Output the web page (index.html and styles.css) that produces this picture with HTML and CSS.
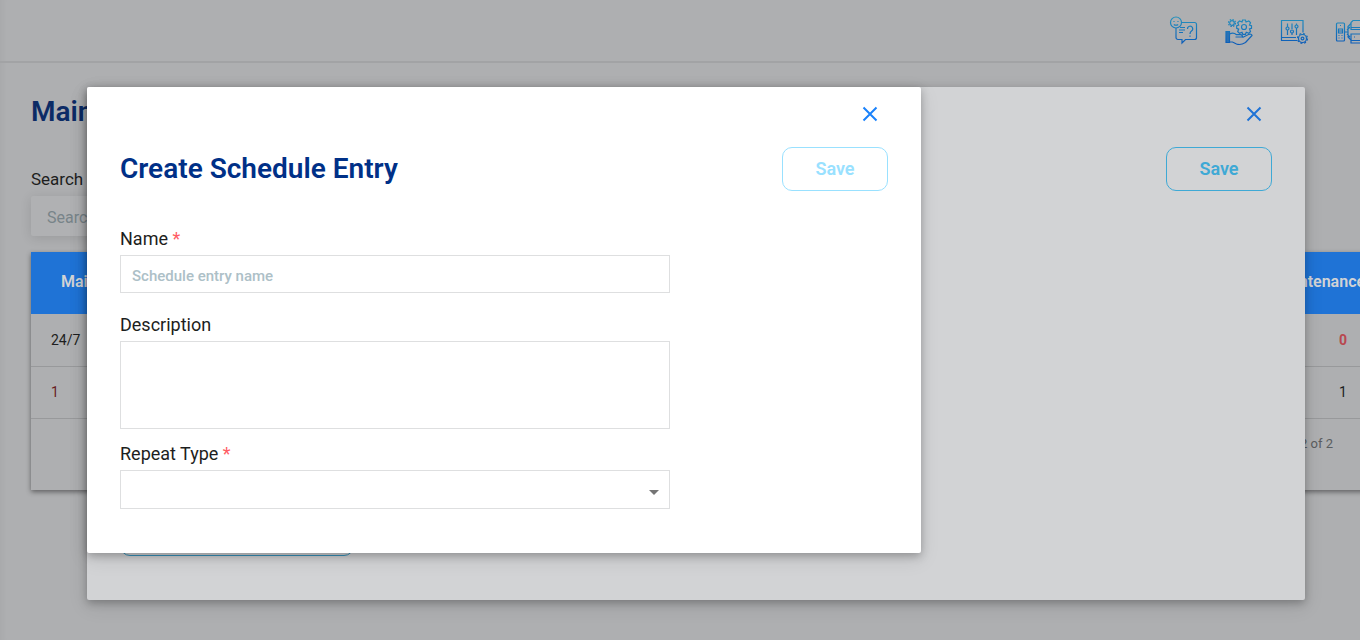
FILE: index.html
```html
<!DOCTYPE html>
<html lang="en">
<head>
<meta charset="utf-8">
<title>Create Schedule Entry</title>
<link rel="stylesheet" href="styles.css">
</head>
<body>
<svg class="defs" width="0" height="0" aria-hidden="true">
  <defs>
    <linearGradient id="ink" gradientUnits="userSpaceOnUse" x1="0" y1="0" x2="0" y2="30">
      <stop offset="0" stop-color="#2593bd"/>
      <stop offset="1" stop-color="#0a57b8"/>
    </linearGradient>
  </defs>
</svg>
<div class="page">
  <header class="topbar">
    <nav class="tools" aria-label="Tools">
      <a href="#help" aria-label="Help"><svg class="tool-icon" viewBox="0 0 30 30">
        <circle cx="7" cy="6.500" r="5.500"/>
        <path d="M5 5v1M9 5v1M4.800 8.400q2.200 1.600 4.400 0"/>
        <path d="M12.500 6.500h13a2 2 0 0 1 2 2v13a2 2 0 0 1-2 2h-9l-3.500 3.500v-3.500h-4a2 2 0 0 1-2-2v-9.500"/>
        <path d="M11 11.500h5M10 14h6M10 16.500h4"/>
        <path d="M18.500 13a2.600 2.600 0 1 1 4 2q-1.500 1-1.500 3M21 19.500v1.200"/>
      </svg></a>
      <a href="#services" aria-label="Services"><svg class="tool-icon" viewBox="0 0 30 30">
        <circle cx="8" cy="7" r="2.300"/><circle cx="8" cy="7" r="3.500" stroke-dasharray="1.500 1.250"/>
        <circle cx="20" cy="11" r="2.500"/>
        <path d="M18.600 4h2.800l.6 2 2.800-1 1.700 1.700-1 2.500 2 .6v2.600l-2 .6 1 2.500-1.700 1.800-2.500-1-.9 2h-2.600l-.8-2-2.500 1-1.800-1.800 1-2.400-2-.7v-2.600l2-.6-1-2.500 1.800-1.700 2.500 1z"/>
        <path class="solid" d="M2 15.500h3.500v11h-3.500z"/>
        <path d="M5.500 18q4-2 7 .7h4q2 0 2 2.300h-7M18.500 21.500l6-3q3-1 3.500 1l-6.500 7q-5 3-9 1.500l-4-2h-3"/>
      </svg></a>
      <a href="#settings" aria-label="Settings"><svg class="tool-icon" viewBox="0 0 30 30">
        <path d="M18 24.500h-15.500v-20h21.500v12M2.500 21.500h14.500M8.500 7.500v3.500M8.500 14v5M13 7.500v5.500M13 17v2M17.500 7.500v1.500M17.500 12v7"/>
        <circle cx="8.500" cy="12.500" r="1.500"/><circle cx="13" cy="15.500" r="1.500"/><circle cx="17.500" cy="10.500" r="1.500"/>
        <circle cx="23.500" cy="22.500" r="1.400"/>
        <circle cx="23.500" cy="22.500" r="4"/>
        <circle cx="23.500" cy="22.500" r="5" stroke-dasharray="2 1.930"/>
      </svg></a>
      <a href="#devices" aria-label="Devices"><svg class="tool-icon" viewBox="0 0 30 30">
        <rect x="2.500" y="7" width="8" height="18" rx="1"/>
        <path d="M6 9.500h1M4.500 13h4v4h-4zM4.500 15h4M4.500 19.500h1M7.500 19.500h1M4.500 22h1M7.500 22h1M10.500 16h3.500M17 7.500l-3 3v10.500l3 3M13 14l3-3M13 18l3 3"/>
        <path d="M30 4.500h-11l-2 2v7h13M17 11.500h13M30 18h-13v9h13M17 24.500h13M20 21h1"/>
      </svg></a>
    </nav>
  </header>
  <main class="content">
    <h1 class="title page-title">Maintenance</h1>
    <label class="search-label" for="search">Search</label>
    <input class="search" id="search" type="search" placeholder="Search">
    <div class="table-card">
      <table class="grid">
        <thead>
          <tr><th class="first">Maintenance</th><th class="last">Maintenance</th></tr>
        </thead>
        <tbody>
          <tr><td>24/7</td><td class="last alert">0</td></tr>
          <tr><td class="warn">1</td><td class="last">1</td></tr>
        </tbody>
      </table>
      <div class="pager">1 – 2 of 2</div>
    </div>
  </main>
</div>

<section class="dialog dialog-back" aria-label="Schedule">
  <div class="close-row">
    <button class="close" type="button" aria-label="Close"><svg class="cross" viewBox="0 0 16 16"><path d="M1.500 1.500l13 13M14.500 1.500l-13 13"/></svg></button>
  </div>
  <div class="dialog-head end"><button class="save" type="button">Save</button></div>
  <button class="add-entry" type="button" aria-label="Add entry"></button>
</section>

<section class="dialog dialog-front" role="dialog" aria-labelledby="dialog-title">
  <div class="close-row">
    <button class="close" type="button" aria-label="Close"><svg class="cross" viewBox="0 0 16 16"><path d="M1.500 1.500l13 13M14.500 1.500l-13 13"/></svg></button>
  </div>
  <div class="dialog-head">
    <h2 class="title" id="dialog-title">Create Schedule Entry</h2>
    <button class="save" type="button" disabled>Save</button>
  </div>
  <form class="form">
    <div class="field">
      <label for="name">Name <span class="required">*</span></label>
      <input class="box" id="name" type="text" placeholder="Schedule entry name">
    </div>
    <div class="field field-text">
      <label for="description">Description</label>
      <textarea class="box area" id="description"></textarea>
    </div>
    <div class="field">
      <label for="repeat">Repeat Type <span class="required">*</span></label>
      <div class="select-wrap">
        <select class="box" id="repeat"><option></option></select>
        <svg class="arrow" viewBox="0 0 10 5"><path d="M0 0h10l-5 5z"/></svg>
      </div>
    </div>
  </form>
</section>
</body>
</html>
```
FILE: styles.css
```css
* {
  box-sizing: border-box;
}

body {
  margin: 0;
  background: #aeafb1;
  color: #1d1e20;
  font-family: Roboto, "Liberation Sans", sans-serif;
  font-size: 16px;
  overflow: hidden;
}

button,
input,
select,
textarea {
  font-family: inherit;
  margin: 0;
}

.defs {
  position: absolute;
}

.page {
  min-height: 100vh;
  overflow: hidden;
  box-shadow: inset 8px 0 8px -8px rgba(0, 0, 0, 0.06);
}

.topbar {
  height: 63px;
  border-bottom: 2px solid #a2a3a5;
  overflow: hidden;
}

.tools {
  display: flex;
  justify-content: flex-end;
  gap: 25px;
  padding-top: 16px;
  margin-right: -4px;
}

.tool-icon {
  display: block;
  width: 30px;
  height: 30px;
  fill: none;
  stroke: url(#ink);
  stroke-width: 1.2;
}

.solid {
  fill: #2a71b5;
}

.content {
  padding: 33px 0 0 31px;
}

.title {
  margin: 0;
  color: #003087;
  font-size: 28px;
  font-weight: 600;
  line-height: 32px;
}

.page-title {
  color: #0c2b66;
}

.search-label {
  display: block;
  margin-top: 41px;
  font-size: 17px;
  line-height: 20px;
}

.search {
  display: block;
  width: 300px;
  height: 40px;
  margin-top: 7px;
  padding: 2px 16px 0;
  border: 0;
  border-radius: 2px;
  background: #b0b1b3;
  box-shadow: 0 2px 12px rgba(0, 0, 0, 0.12);
  font-size: 16px;
}

.search::placeholder {
  color: #788489;
}

.table-card {
  margin: 16px -80px 0 0;
  background: #aeafb1;
  box-shadow: 0 2px 5px rgba(0, 0, 0, 0.45);
}

.grid {
  width: 100%;
  table-layout: fixed;
  border-collapse: collapse;
}

.grid th {
  height: 62px;
  padding: 0 0 3px;
  background: #1f73d6;
  color: #d2d3d5;
  font-weight: 600;
  white-space: nowrap;
}

.grid .first {
  padding-left: 30px;
  text-align: left;
}

.grid td {
  height: 52px;
  padding: 0 20px;
  border-bottom: 1px solid #98999b;
  font-size: 14px;
}

.grid .last {
  width: 194px;
  padding-left: 0;
  padding-right: 0;
  text-align: center;
}

.grid th.last {
  padding-left: 26px;
  text-align: left;
}

.grid .alert {
  color: #b8474f;
  font-weight: 700;
}

.grid .warn {
  color: #681e22;
}

.pager {
  height: 71px;
  padding: 15px 107px 0 0;
  color: #5a5d60;
  font-size: 13px;
  line-height: 20px;
  text-align: right;
}

.dialog {
  position: absolute;
  top: 87px;
  left: 87px;
  padding: 16px 33px 44px;
  border-radius: 2px;
  box-shadow: 0 3px 8px rgba(0, 0, 0, 0.25), 0 6px 20px rgba(0, 0, 0, 0.1);
}

.dialog-back {
  right: 55px;
  background: #d2d3d5;
}

.dialog-front {
  width: 834px;
  background: #fff;
}

.close-row {
  display: flex;
  justify-content: flex-end;
  padding-right: 7px;
}

.close {
  display: flex;
  padding: 3px;
  border: 0;
  background: none;
  color: #1a82fb;
}

.cross {
  width: 16px;
  height: 16px;
  fill: none;
  stroke: currentColor;
  stroke-width: 2;
}

.dialog-back .close {
  color: #1f73d6;
}

.dialog-head {
  display: flex;
  align-items: center;
  justify-content: space-between;
  margin-top: 22px;
}

.end {
  justify-content: flex-end;
}

.save {
  width: 106px;
  height: 44px;
  padding: 0 0 2px;
  border: 1px solid #3fa9d5;
  border-radius: 10px;
  background: none;
  color: #3fa9d5;
  font-size: 18px;
  font-weight: 600;
}

.save:disabled {
  border-color: #99e1ff;
  color: #99e1ff;
}

.add-entry {
  display: block;
  width: 234px;
  height: 44px;
  margin-top: 321px;
  border: 1px solid #3793bb;
  border-radius: 10px;
  background: none;
}

.form {
  display: flex;
  flex-direction: column;
  width: 550px;
  max-width: 100%;
  margin-top: 36px;
}

.field {
  display: flex;
  flex-direction: column;
  gap: 4px;
  font-size: 18px;
  line-height: 24px;
}

.field-text {
  margin: 20px 0 13px;
}

.required {
  color: #ff5c64;
}

.box {
  display: block;
  width: 100%;
  height: 38px;
  padding: 3px 11px 0;
  border: 1px solid #dedfe0;
  border-radius: 0;
  background: #fff;
  font-size: 15px;
  font-weight: 500;
}

.box::placeholder {
  color: #adc0c7;
}

.area {
  height: 88px;
  resize: none;
}

.select-wrap {
  position: relative;
}

select.box {
  height: 39px;
  appearance: none;
}

.arrow {
  position: absolute;
  top: 20px;
  right: 11px;
  width: 10px;
  height: 5px;
  fill: #757575;
  pointer-events: none;
}
```
